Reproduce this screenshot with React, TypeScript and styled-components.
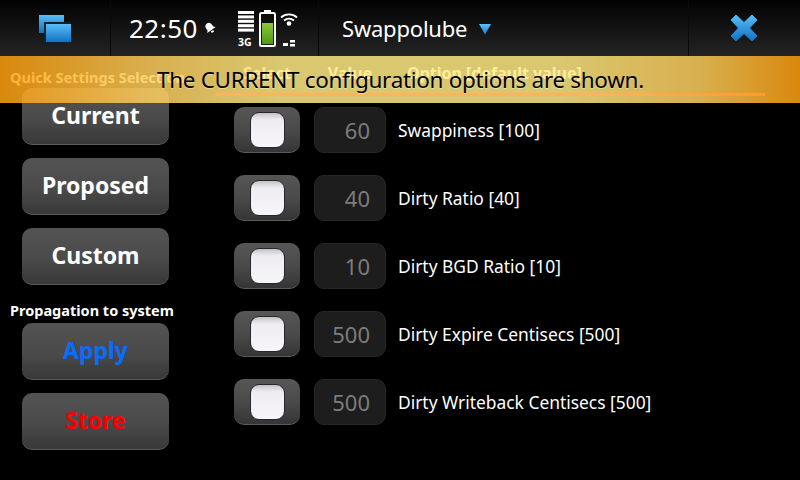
import styled, { createGlobalStyle } from "styled-components";

const GlobalStyle = createGlobalStyle`
    html, body {
        margin: 0;
        padding: 0;
        background: #000000;
    }
`;

const Screen = styled.div`
    width: 800px;
    height: 480px;
    position: relative;
    overflow: hidden;
    background: #000000;
    color: #ffffff;
    font-family: "Noto Sans", "DejaVu Sans", sans-serif;
`;

const StatusBar = styled.header`
    height: 56px;
    display: grid;
    grid-template-columns: 111px 208px 370px 111px;
    background: linear-gradient(180deg, #020202 0%, #242424 100%);
`;

const Zone = styled.div<{ $divider?: boolean }>`
    display: flex;
    align-items: center;
    height: 56px;
    box-sizing: border-box;
    border-right: ${(p) => (p.$divider ? "1px solid #0a0a0a" : "none")};
`;

const IconZone = styled(Zone)`
    justify-content: center;
`;

const InfoZone = styled(Zone)`
    padding-left: 18px;
`;

const TitleZone = styled(Zone)`
    padding-left: 23px;
`;

const Clock = styled.span`
    font-size: 26px;
    line-height: 56px;
    width: 74px;
    flex: none;
    letter-spacing: 0.5px;
`;

const Title = styled.span`
    font-size: 22px;
    line-height: 56px;
    letter-spacing: -0.2px;
`;

const Banner = styled.div`
    position: absolute;
    top: 56px;
    left: 0;
    width: 800px;
    height: 47px;
    z-index: 5;
    background: linear-gradient(
        90deg,
        rgba(255, 160, 15, 0.85) 0%,
        rgba(255, 205, 90, 0.85) 18%,
        rgba(255, 235, 132, 0.85) 35%,
        rgba(255, 235, 132, 0.85) 70%,
        rgba(255, 205, 90, 0.85) 88%,
        rgba(255, 160, 15, 0.85) 100%
    );
`;

const BannerLine = styled.div`
    position: absolute;
    left: 216px;
    top: 37px;
    width: 549px;
    height: 3px;
    background: linear-gradient(90deg, #ffb45c 0%, #ffb45c 70%, #ff9a28 100%);
`;

const BannerText = styled.div`
    position: absolute;
    left: 157px;
    top: 8px;
    color: #000000;
    font-size: 22.5px;
    letter-spacing: -0.32px;
    line-height: 32px;
    white-space: nowrap;
    text-shadow: 0 1px 1px rgba(255, 255, 255, 0.45);
`;

const Content = styled.main`
    display: grid;
    grid-template-columns: 234px 1fr;
    padding-top: 10px;
`;

const SideColumn = styled.section`
    display: flex;
    flex-direction: column;
    padding-left: 10px;
`;

const SideHeading = styled.div<{ $gap?: number }>`
    font-size: 14.5px;
    font-weight: 700;
    line-height: 22px;
    white-space: nowrap;
    margin-top: ${(p) => p.$gap ?? 0}px;
    margin-bottom: 2px;
`;

const ActionButton = styled.div<{ $color?: string }>`
    width: 147px;
    height: 57px;
    margin-left: 12px;
    margin-bottom: 13px;
    box-sizing: border-box;
    display: flex;
    align-items: center;
    justify-content: center;
    padding-bottom: 3px;
    border-radius: 10px;
    background: linear-gradient(180deg, #535353 0%, #4a4a4a 55%, #383838 100%);
    border-bottom: 1px solid #5c5c5c;
    color: ${(p) => p.$color ?? "#ffffff"};
    font-size: 23px;
    font-weight: 700;
`;

const FirstButton = styled(ActionButton)`
    margin-top: -2px;
`;

const OptionsColumn = styled.section`
    display: flex;
    flex-direction: column;
    gap: 22px;
`;

const OptionGrid = styled.div`
    display: grid;
    grid-template-columns: 66px 72px 1fr;
    column-gap: 14px;
    align-items: center;
`;

const HeaderRow = styled(OptionGrid)`
    margin-top: -4px;
    margin-bottom: 1px;
    height: 22px;
    font-size: 16px;
    font-weight: 700;
`;

const HeaderCell = styled.div<{ $indent?: number }>`
    padding-left: ${(p) => p.$indent ?? 0}px;
    text-align: ${(p) => (p.$indent ? "left" : "center")};
    white-space: nowrap;
`;

const OptionRow = styled(OptionGrid)`
    height: 46px;
`;

const Toggle = styled.div`
    width: 66px;
    height: 46px;
    box-sizing: border-box;
    display: flex;
    align-items: center;
    justify-content: center;
    border-radius: 10px;
    background: linear-gradient(180deg, #565656 0%, #4a4a4a 50%, #353535 100%);
    border-bottom: 1px solid #5a5a5a;
`;

const Knob = styled.div`
    width: 35px;
    height: 36px;
    border-radius: 9px;
    border: 1px solid #26262a;
    box-sizing: border-box;
    background: linear-gradient(180deg, #c4c2c6 0%, #eeecf0 20%, #f8f6fb 100%);
`;

const ValueBox = styled.div`
    width: 72px;
    height: 46px;
    box-sizing: border-box;
    border-radius: 10px;
    background: #1d1d1d;
    border: 1px solid #262626;
    color: #7c7c7c;
    font-size: 22px;
    line-height: 45px;
    text-align: right;
    padding-right: 15px;
`;

const OptionLabel = styled.div`
    margin-left: -2px;
    font-size: 17.4px;
    white-space: nowrap;
`;

const SignalGroup = styled.svg`
    margin-left: 20px;
    flex: none;
`;

const NetworkText = styled.text`
    font-family: "Noto Sans", sans-serif;
    font-size: 10.5px;
    font-weight: 700;
    fill: #ffffff;
`;

const ArrowSvg = styled.svg`
    margin-left: 11px;
    margin-top: 3px;
`;

const TaskSvg = styled.svg`
    margin-top: 2px;
    margin-right: 1px;
`;

const CloseSvg = styled.svg`
    margin-right: 2px;
`;

const TaskIcon = () => (
    <TaskSvg width="36" height="30" viewBox="0 0 36 30">
        <defs>
            <linearGradient id="taskBlue" x1="0" y1="0" x2="0" y2="1">
                <stop offset="0" stopColor="#58bdf8" />
                <stop offset="1" stopColor="#1272c4" />
            </linearGradient>
        </defs>
        <rect x="2" y="1" width="25" height="18" fill="url(#taskBlue)" />
        <rect x="7" y="8" width="27" height="21" fill="#10222e" />
        <rect x="9" y="10" width="25" height="18" fill="url(#taskBlue)" />
    </TaskSvg>
);

const BellIcon = () => (
    <svg width="14" height="14" viewBox="0 0 14 14">
        <g transform="rotate(-35 7 7)" fill="#ffffff">
            <path d="M7 1.500c2.400 0 3.500 1.800 3.500 4v2.200l1.600 1.800H1.900l1.600-1.800V5.500c0-2.200 1.100-4 3.500-4z" />
            <rect x="5.600" y="10.400" width="2.800" height="1.800" />
        </g>
    </svg>
);

const StatusIcons = () => (
    <SignalGroup width="62" height="40" viewBox="0 0 62 40">
        <defs>
            <linearGradient id="batteryGreen" x1="0" y1="0" x2="0" y2="1">
                <stop offset="0" stopColor="#8cc63a" />
                <stop offset="1" stopColor="#4f9a12" />
            </linearGradient>
        </defs>
        {[0, 4.4, 8.8, 13.2, 17.6].map((y) => (
            <rect key={y} x="1" y={y + 3} width="16" height="3" fill="#ffffff" />
        ))}
        <NetworkText x="1" y="37.500">3G</NetworkText>
        <rect x="23" y="5" width="15" height="33" rx="1.500" fill="none" stroke="#ffffff" strokeWidth="2" />
        <rect x="27" y="2" width="7" height="3" fill="#ffffff" />
        <rect x="25" y="15" width="11" height="21" fill="url(#batteryGreen)" />
        <path d="M44 9.500a12 12 0 0 1 16 0" fill="none" stroke="#ffffff" strokeWidth="1.800" />
        <path d="M47 12.500a8 8 0 0 1 10 0" fill="none" stroke="#ffffff" strokeWidth="1.800" />
        <circle cx="52" cy="15.500" r="2.300" fill="#ffffff" />
        <rect x="46" y="35" width="5" height="3" fill="#ffffff" />
        <rect x="53" y="32" width="5" height="2.500" fill="#ffffff" />
        <rect x="53" y="36" width="5" height="2.500" fill="#ffffff" />
    </SignalGroup>
);

const MenuArrow = () => (
    <ArrowSvg width="14" height="11" viewBox="0 0 14 11">
        <defs>
            <linearGradient id="arrowBlue" x1="0" y1="0" x2="0" y2="1">
                <stop offset="0" stopColor="#5cc0fa" />
                <stop offset="1" stopColor="#1a7ccc" />
            </linearGradient>
        </defs>
        <path d="M1 0h12L7 10.500z" fill="url(#arrowBlue)" />
    </ArrowSvg>
);

const CloseIcon = () => (
    <CloseSvg width="28" height="28" viewBox="0 0 28 28">
        <defs>
            <linearGradient id="closeBlue" x1="0" y1="0" x2="0" y2="1">
                <stop offset="0" stopColor="#58bdf8" />
                <stop offset="1" stopColor="#1272c4" />
            </linearGradient>
        </defs>
        <path
            d="M6 1 14 8.500 22 1 27 6 19.500 14 27 22 22 27 14 19.500 6 27 1 22 8.500 14 1 6z"
            fill="url(#closeBlue)"
            stroke="url(#closeBlue)"
            strokeLinejoin="round"
        />
    </CloseSvg>
);

const options = [
    { value: 60, label: "Swappiness [100]" },
    { value: 40, label: "Dirty Ratio [40]" },
    { value: 10, label: "Dirty BGD Ratio [10]" },
    { value: 500, label: "Dirty Expire Centisecs [500]" },
    { value: 500, label: "Dirty Writeback Centisecs [500]" },
];

const App = () => {
    return (
        <Screen>
            <GlobalStyle />
            <StatusBar>
                <IconZone $divider>
                    <TaskIcon />
                </IconZone>
                <InfoZone $divider>
                    <Clock>22:50</Clock>
                    <BellIcon />
                    <StatusIcons />
                </InfoZone>
                <TitleZone $divider>
                    <Title>Swappolube</Title>
                    <MenuArrow />
                </TitleZone>
                <IconZone>
                    <CloseIcon />
                </IconZone>
            </StatusBar>
            <Banner>
                <BannerLine />
                <BannerText>The CURRENT configuration options are shown.</BannerText>
            </Banner>
            <Content>
                <SideColumn>
                    <SideHeading>Quick Settings Selection</SideHeading>
                    <FirstButton>Current</FirstButton>
                    <ActionButton>Proposed</ActionButton>
                    <ActionButton>Custom</ActionButton>
                    <SideHeading $gap={1}>Propagation to system</SideHeading>
                    <ActionButton $color="#0a6cff">Apply</ActionButton>
                    <ActionButton $color="#ff0000">Store</ActionButton>
                </SideColumn>
                <OptionsColumn>
                    <HeaderRow>
                        <HeaderCell>Select</HeaderCell>
                        <HeaderCell>Value</HeaderCell>
                        <HeaderCell $indent={7}>Option [default value]</HeaderCell>
                    </HeaderRow>
                    {options.map((option) => (
                        <OptionRow key={option.label}>
                            <Toggle>
                                <Knob />
                            </Toggle>
                            <ValueBox>{option.value}</ValueBox>
                            <OptionLabel>{option.label}</OptionLabel>
                        </OptionRow>
                    ))}
                </OptionsColumn>
            </Content>
        </Screen>
    );
};

export default App;
